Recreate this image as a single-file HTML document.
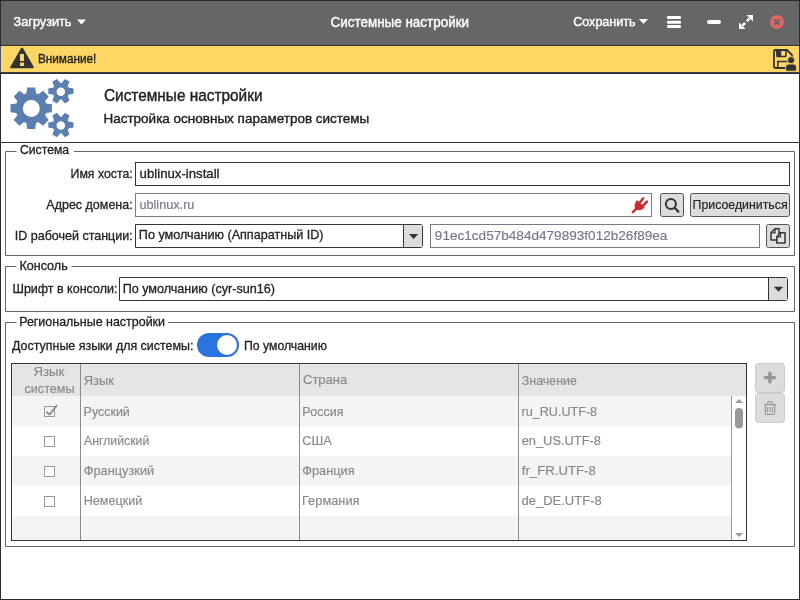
<!DOCTYPE html>
<html><head><meta charset="utf-8"><style>html,body{margin:0;padding:0;width:800px;height:600px;overflow:hidden;background:#fff}svg{display:block}text{font-family:"Liberation Sans",sans-serif}</style></head>
<body><svg style="will-change:transform" width="800" height="600" viewBox="0 0 800 600">
<rect x="0" y="0" width="800" height="600" fill="#fff"/>
<rect x="0" y="0" width="800" height="45" fill="#666"/>
<rect x="0" y="45" width="800" height="1" fill="#2e3037"/>
<rect x="0" y="46" width="800" height="26" fill="#fdd663"/>
<rect x="0" y="72" width="800" height="1" fill="#3b3e48"/>
<rect x="0" y="73" width="800" height="1" fill="#2c2d33"/>
<rect x="0" y="142" width="800" height="1" fill="#333"/>
<!-- header icons -->
<polygon points="77,19.5 86,19.5 81.5,24.5" fill="#fff"/>
<polygon points="639,19 648,19 643.5,24" fill="#fff"/>
<rect x="667" y="16" width="14" height="3" rx="1.3" fill="#fff"/>
<rect x="667" y="20.8" width="14" height="3" rx="1.3" fill="#fff"/>
<rect x="667" y="25" width="14" height="3" rx="1.3" fill="#fff"/>
<rect x="707" y="20" width="14" height="4" rx="2" fill="#fff"/>
<polygon points="753,15 753,21.5 746.5,15" fill="#fff"/>
<polygon points="739,29 739,22.5 745.5,29" fill="#fff"/>
<line x1="749.5" y1="18.5" x2="746.8" y2="21.2" stroke="#fff" stroke-width="2.6"/>
<line x1="745.2" y1="22.8" x2="742.5" y2="25.5" stroke="#fff" stroke-width="2.6"/>
<circle cx="777" cy="22" r="7" fill="#e06666"/>
<path d="M774.2 19.2L779.8 24.8M779.8 19.2L774.2 24.8" stroke="#666" stroke-width="2.2"/>
<!-- warning -->
<path d="M22 48.6L11.2 67.3H32.8Z" fill="#333" stroke="#333" stroke-width="2" stroke-linejoin="round"/>
<rect x="20" y="54" width="4" height="7" fill="#fdd663"/>
<rect x="20" y="62.5" width="4" height="3.5" fill="#fdd663"/>
<!-- floppy -->
<path d="M775.5 50H787L792 55V66.5Q792 68 790.5 68H775.5Q774 68 774 66.5V51.5Q774 50 775.5 50Z" fill="none" stroke="#333" stroke-width="1.8" stroke-linejoin="round"/>
<rect x="776.9" y="50" width="9" height="6.5" rx="0.8" fill="none" stroke="#333" stroke-width="1.6"/>
<rect x="776.9" y="50" width="4.3" height="6.5" fill="#333"/>
<path d="M777.8 68V61.5H789" fill="none" stroke="#333" stroke-width="1.6"/>
<circle cx="791" cy="60.2" r="3.6" fill="#333" stroke="#fdd663" stroke-width="0.9"/>
<path d="M785.6 70V67.2Q785.6 64 788.8 64H793.4Q796.6 64 796.6 67.2V70Q796.6 71.2 795.4 71.2H786.8Q785.6 71.2 785.6 70Z" fill="#333" stroke="#fdd663" stroke-width="0.9"/>
<!-- gears -->
<path fill="#5a7fb0" fill-rule="evenodd" d="M46.04 103.40L51.90 104.20L51.90 112.20L46.04 113.00A15.60 15.60 0 0 1 45.09 115.30L48.67 120.01L43.01 125.67L38.30 122.09A15.60 15.60 0 0 1 36.00 123.04L35.20 128.90L27.20 128.90L26.40 123.04A15.60 15.60 0 0 1 24.10 122.09L19.39 125.67L13.73 120.01L17.31 115.30A15.60 15.60 0 0 1 16.36 113.00L10.50 112.20L10.50 104.20L16.36 103.40A15.60 15.60 0 0 1 17.31 101.10L13.73 96.39L19.39 90.73L24.10 94.31A15.60 15.60 0 0 1 26.40 93.36L27.20 87.50L35.20 87.50L36.00 93.36A15.60 15.60 0 0 1 38.30 94.31L43.01 90.73L48.67 96.39L45.09 101.10A15.60 15.60 0 0 1 46.04 103.40ZM22.80 108.40a8.50 8.50 0 1 0 17.00 0a8.50 8.50 0 1 0 -17.00 0Z"/>
<path fill="#5a7fb0" fill-rule="evenodd" d="M68.38 87.60L73.50 88.60L73.50 93.80L68.38 94.80A8.30 8.30 0 0 1 67.76 95.88L69.45 100.81L64.95 103.41L61.52 99.48A8.30 8.30 0 0 1 60.28 99.48L56.85 103.41L52.35 100.81L54.04 95.88A8.30 8.30 0 0 1 53.42 94.80L48.30 93.80L48.30 88.60L53.42 87.60A8.30 8.30 0 0 1 54.04 86.52L52.35 81.59L56.85 78.99L60.28 82.92A8.30 8.30 0 0 1 61.52 82.92L64.95 78.99L69.45 81.59L67.76 86.52A8.30 8.30 0 0 1 68.38 87.60ZM56.55 91.80a4.25 4.25 0 1 0 8.50 0a4.25 4.25 0 1 0 -8.50 0Z"/>
<path fill="#5a7fb0" fill-rule="evenodd" d="M68.38 121.40L73.50 122.40L73.50 127.60L68.38 128.60A8.30 8.30 0 0 1 67.76 129.68L69.45 134.61L64.95 137.21L61.52 133.28A8.30 8.30 0 0 1 60.28 133.28L56.85 137.21L52.35 134.61L54.04 129.68A8.30 8.30 0 0 1 53.42 128.60L48.30 127.60L48.30 122.40L53.42 121.40A8.30 8.30 0 0 1 54.04 120.32L52.35 115.39L56.85 112.79L60.28 116.72A8.30 8.30 0 0 1 61.52 116.72L64.95 112.79L69.45 115.39L67.76 120.32A8.30 8.30 0 0 1 68.38 121.40ZM56.55 125.40a4.25 4.25 0 1 0 8.50 0a4.25 4.25 0 1 0 -8.50 0Z"/>
<!-- frames -->
<path d="M16.5 151.5H5.5V255.5H794.5V151.5H74" fill="none" stroke="#666"/>
<path d="M16.5 266.5H5.5V311.5H794.5V266.5H71.5" fill="none" stroke="#666"/>
<path d="M16.5 322.5H5.5V546.5H794.5V322.5H168" fill="none" stroke="#666"/>
<!-- entries -->
<rect x="135.5" y="162.5" width="654" height="23" fill="#fff" stroke="#333"/>
<rect x="135.5" y="193.5" width="516" height="23" fill="#fff" stroke="#7a7a8e"/>
<path d="M637.2 200L644.8 207.6A5.37 7.4 45 0 1 637.2 200Z" fill="#d32a2a"/>
<line x1="640" y1="202.3" x2="643.2" y2="198.3" stroke="#d32a2a" stroke-width="2.4" stroke-linecap="round"/>
<line x1="643" y1="205.6" x2="647" y2="201.6" stroke="#d32a2a" stroke-width="2.4" stroke-linecap="round"/>
<line x1="636.5" y1="208.5" x2="632.8" y2="212.2" stroke="#d32a2a" stroke-width="2.4" stroke-linecap="round"/>
<rect x="660.5" y="193.5" width="23" height="23" rx="2" fill="#dcdcdc" stroke="#555"/>
<circle cx="670.9" cy="204.1" r="5" fill="none" stroke="#333" stroke-width="2"/>
<line x1="674.8" y1="208" x2="678.4" y2="211.6" stroke="#333" stroke-width="2.2" stroke-linecap="round"/>
<rect x="690.5" y="193.5" width="99" height="23" rx="2" fill="#dcdcdc" stroke="#555"/>
<!-- ID combo -->
<path d="M135.5 224.5H420.5Q422.5 224.5 422.5 226.5V245.5Q422.5 247.5 420.5 247.5H135.5Z" fill="#fff" stroke="#333"/>
<rect x="404" y="225" width="18" height="22" fill="#dcdcdc"/>
<line x1="403.5" y1="225" x2="403.5" y2="247" stroke="#333"/>
<polygon points="409,234 418.2,234 413.6,239" fill="#333"/>
<rect x="430.5" y="224.5" width="329" height="23" fill="#fff" stroke="#7a7a8e"/>
<rect x="766.5" y="224.5" width="23" height="23" rx="2" fill="#dcdcdc" stroke="#555"/>
<path d="M775 228.8H779V240H771V232.8Z" fill="#e4e4e4" stroke="#333" stroke-width="1.5" stroke-linejoin="round"/>
<path d="M771 232.8H775V228.8" fill="none" stroke="#333" stroke-width="1.2"/>
<path d="M780.5 232.8H785V243H776.8V236.8Z" fill="#e4e4e4" stroke="#333" stroke-width="1.5" stroke-linejoin="round"/>
<path d="M776.8 236.8H780.5V232.8" fill="none" stroke="#333" stroke-width="1.2"/>
<!-- console combo -->
<path d="M119.5 277.5H785.5Q787.5 277.5 787.5 279.5V298.5Q787.5 300.5 785.5 300.5H119.5Z" fill="#fff" stroke="#333"/>
<rect x="769" y="278" width="18" height="22" fill="#dcdcdc"/>
<line x1="768.5" y1="278" x2="768.5" y2="300" stroke="#333"/>
<polygon points="773.8,286.7 783.2,286.7 778.5,291.8" fill="#333"/>
<!-- toggle -->
<rect x="197" y="333" width="42" height="24" rx="12" fill="#2a72de"/>
<circle cx="227" cy="345" r="10" fill="#fff"/>
<!-- table -->
<rect x="11.5" y="363.5" width="735" height="177" fill="#fff" stroke="#333"/>
<rect x="12" y="364" width="734" height="32" fill="#e5e5e5"/>
<rect x="12" y="396" width="719" height="30" fill="#f4f4f4"/>
<rect x="12" y="456" width="719" height="30" fill="#f4f4f4"/>
<rect x="12" y="516" width="719" height="24" fill="#f4f4f4"/>
<rect x="80" y="364" width="1" height="176" fill="#8c8c8c"/>
<rect x="299" y="364" width="1" height="176" fill="#8c8c8c"/>
<rect x="518" y="364" width="1" height="176" fill="#8c8c8c"/>
<rect x="731" y="396" width="15" height="144" fill="#fff"/>
<rect x="731" y="396" width="1" height="144" fill="#999"/>
<polygon points="735,403 743,403 739,399" fill="#999"/>
<polygon points="735,533 743,533 739,537" fill="#999"/>
<rect x="735" y="408" width="8" height="20.5" rx="4" fill="#999"/>
<rect x="44.5" y="406.5" width="10" height="10" fill="none" stroke="#999"/>
<path d="M46.8 412.3L49.6 414.6L56.6 405.8" fill="none" stroke="#888" stroke-width="1.8" stroke-linecap="round" stroke-linejoin="round"/>
<rect x="44.5" y="436.5" width="10" height="10" fill="#fff" stroke="#999"/>
<rect x="44.5" y="466.5" width="10" height="10" fill="#fff" stroke="#999"/>
<rect x="44.5" y="496.5" width="10" height="10" fill="#fff" stroke="#999"/>
<!-- side buttons -->
<rect x="755.5" y="363.5" width="29" height="29" rx="3" fill="#dcdcdc" stroke="#cbcbcb"/>
<rect x="755.5" y="393.5" width="29" height="29" rx="3" fill="#dcdcdc" stroke="#cbcbcb"/>
<path d="M765.3 377.6H774.5M769.9 373.2V382" stroke="#959595" stroke-width="3.4" stroke-linecap="round"/>
<path d="M764 404.6H776M767.6 404.3V402.8Q767.6 401.6 768.8 401.6H771.2Q772.4 401.6 772.4 402.8V404.3M765.4 404.6V412.8Q765.4 414.4 767 414.4H773Q774.6 414.4 774.6 412.8V404.6" fill="none" stroke="#999" stroke-width="1.3"/>
<path d="M767.6 407V412.2M770 407V412.2M772.4 407V412.2" stroke="#999" stroke-width="1.1"/>
<!-- window border -->
<rect x="0" y="46" width="1" height="26" fill="#50566a"/>
<path d="M0.5 0V46M0.5 72V600M0 0.5H800M799.5 0V600M0 599.5H800" fill="none" stroke="#2b2b2b"/>
<text x="13.60" y="25.5" font-size="13.2" fill="#fff" stroke="#fff" stroke-width="0.4" textLength="57.81" lengthAdjust="spacingAndGlyphs">Загрузить</text>
<text x="330.50" y="27" font-size="14" fill="#fff" stroke="#fff" stroke-width="0.4" textLength="138.58" lengthAdjust="spacingAndGlyphs">Системные настройки</text>
<text x="573.20" y="25.5" font-size="13.2" fill="#fff" stroke="#fff" stroke-width="0.4" textLength="62.42" lengthAdjust="spacingAndGlyphs">Сохранить</text>
<text x="37.97" y="62.75" font-size="13.2" fill="#222" stroke="#222" stroke-width="0.4" textLength="58.34" lengthAdjust="spacingAndGlyphs">Внимание!</text>
<text x="103.93" y="100.7" font-size="16.2" fill="#222" stroke="#222" stroke-width="0.4" textLength="158.62" lengthAdjust="spacingAndGlyphs">Системные настройки</text>
<text x="103.45" y="122.8" font-size="13.6" fill="#222" stroke="#222" stroke-width="0.4" textLength="265.89" lengthAdjust="spacingAndGlyphs">Настройка основных параметров системы</text>
<text x="19.98" y="154.2" font-size="13" fill="#222" stroke="#222" stroke-width="0.3" textLength="49.18" lengthAdjust="spacingAndGlyphs">Система</text>
<text x="70.58" y="178" font-size="13" fill="#222" stroke="#222" stroke-width="0.3" textLength="62.10" lengthAdjust="spacingAndGlyphs">Имя хоста:</text>
<text x="46.33" y="209" font-size="13" fill="#222" stroke="#222" stroke-width="0.3" textLength="86.33" lengthAdjust="spacingAndGlyphs">Адрес домена:</text>
<text x="14.77" y="239.7" font-size="13" fill="#222" stroke="#222" stroke-width="0.3" textLength="117.89" lengthAdjust="spacingAndGlyphs">ID рабочей станции:</text>
<text x="139.62" y="177.5" font-size="13" fill="#222" stroke="#222" stroke-width="0.3" textLength="79.89" lengthAdjust="spacingAndGlyphs">ublinux-install</text>
<text x="139.38" y="208.5" font-size="13" fill="#76768a" stroke="#76768a" stroke-width="0.15" textLength="55.05" lengthAdjust="spacingAndGlyphs">ublinux.ru</text>
<text x="692.60" y="208.6" font-size="12" fill="#222" stroke="#222" stroke-width="0.15" textLength="95.00" lengthAdjust="spacingAndGlyphs">Присоединиться</text>
<text x="138.85" y="239.2" font-size="13" fill="#222" stroke="#222" stroke-width="0.3" textLength="184.66" lengthAdjust="spacingAndGlyphs">По умолчанию (Аппаратный ID)</text>
<text x="434.83" y="239.5" font-size="13" fill="#76768a" stroke="#76768a" stroke-width="0.15" textLength="232.56" lengthAdjust="spacingAndGlyphs">91ec1cd57b484d479893f012b26f89ea</text>
<text x="19.41" y="269.6" font-size="13" fill="#222" stroke="#222" stroke-width="0.3" textLength="48.30" lengthAdjust="spacingAndGlyphs">Консоль</text>
<text x="12.45" y="292.9" font-size="13" fill="#222" stroke="#222" stroke-width="0.3" textLength="104.94" lengthAdjust="spacingAndGlyphs">Шрифт в консоли:</text>
<text x="122.63" y="292.9" font-size="13" fill="#222" stroke="#222" stroke-width="0.3" textLength="152.33" lengthAdjust="spacingAndGlyphs">По умолчанию (cyr-sun16)</text>
<text x="19.14" y="325.75" font-size="13" fill="#222" stroke="#222" stroke-width="0.3" textLength="145.90" lengthAdjust="spacingAndGlyphs">Региональные настройки</text>
<text x="12.05" y="350" font-size="13" fill="#222" stroke="#222" stroke-width="0.3" textLength="181.36" lengthAdjust="spacingAndGlyphs">Доступные языки для системы:</text>
<text x="243.95" y="349.5" font-size="13" fill="#222" stroke="#222" stroke-width="0.3" textLength="82.90" lengthAdjust="spacingAndGlyphs">По умолчанию</text>
<text x="33.56" y="376.3" font-size="13.2" fill="#888" stroke="#888" stroke-width="0.15" textLength="30.70" lengthAdjust="spacingAndGlyphs">Язык</text>
<text x="24.56" y="392.5" font-size="13.2" fill="#888" stroke="#888" stroke-width="0.15" textLength="49.87" lengthAdjust="spacingAndGlyphs">системы</text>
<text x="83.63" y="384.5" font-size="13.2" fill="#888" stroke="#888" stroke-width="0.15" textLength="30.22" lengthAdjust="spacingAndGlyphs">Язык</text>
<text x="303.05" y="384.4" font-size="13.2" fill="#888" stroke="#888" stroke-width="0.15" textLength="44.16" lengthAdjust="spacingAndGlyphs">Страна</text>
<text x="521.82" y="384.7" font-size="13.2" fill="#888" stroke="#888" stroke-width="0.15" textLength="55.00" lengthAdjust="spacingAndGlyphs">Значение</text>
<text x="83.57" y="415.5" font-size="13.2" fill="#888" stroke="#888" stroke-width="0.15" textLength="46.25" lengthAdjust="spacingAndGlyphs">Русский</text>
<text x="302.35" y="415.6" font-size="13.2" fill="#888" stroke="#888" stroke-width="0.15" textLength="41.13" lengthAdjust="spacingAndGlyphs">Россия</text>
<text x="521.60" y="415.5" font-size="13.2" fill="#888" stroke="#888" stroke-width="0.15" textLength="75.52" lengthAdjust="spacingAndGlyphs">ru_RU.UTF-8</text>
<text x="83.93" y="445.3" font-size="13.2" fill="#888" stroke="#888" stroke-width="0.15" textLength="65.43" lengthAdjust="spacingAndGlyphs">Английский</text>
<text x="302.34" y="445.2" font-size="13.2" fill="#888" stroke="#888" stroke-width="0.15" textLength="29.48" lengthAdjust="spacingAndGlyphs">США</text>
<text x="521.63" y="445.3" font-size="13.2" fill="#888" stroke="#888" stroke-width="0.15" textLength="79.40" lengthAdjust="spacingAndGlyphs">en_US.UTF-8</text>
<text x="83.81" y="475.3" font-size="13.2" fill="#888" stroke="#888" stroke-width="0.15" textLength="70.38" lengthAdjust="spacingAndGlyphs">Французкий</text>
<text x="302.30" y="475.3" font-size="13.2" fill="#888" stroke="#888" stroke-width="0.15" textLength="52.35" lengthAdjust="spacingAndGlyphs">Франция</text>
<text x="521.76" y="475.3" font-size="13.2" fill="#888" stroke="#888" stroke-width="0.15" textLength="74.00" lengthAdjust="spacingAndGlyphs">fr_FR.UTF-8</text>
<text x="83.68" y="505.3" font-size="13.2" fill="#888" stroke="#888" stroke-width="0.15" textLength="58.69" lengthAdjust="spacingAndGlyphs">Немецкий</text>
<text x="302.03" y="505.2" font-size="13.2" fill="#888" stroke="#888" stroke-width="0.15" textLength="57.55" lengthAdjust="spacingAndGlyphs">Германия</text>
<text x="521.59" y="505.3" font-size="13.2" fill="#888" stroke="#888" stroke-width="0.15" textLength="80.06" lengthAdjust="spacingAndGlyphs">de_DE.UTF-8</text></svg></body></html>
